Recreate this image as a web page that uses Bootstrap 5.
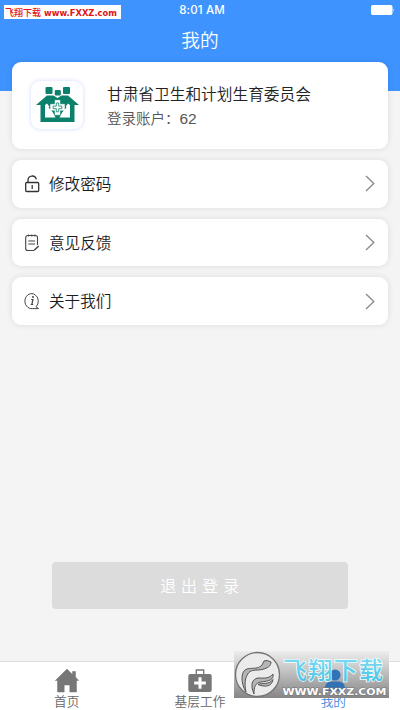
<!DOCTYPE html>
<html lang="zh-CN">
<head>
<meta charset="utf-8">
<meta name="viewport" content="width=device-width, initial-scale=1">
<title>我的</title>
<link href="https://cdn.jsdelivr.net/npm/bootstrap@5.3.0/dist/css/bootstrap.min.css" rel="stylesheet">
<style>
body{background:#f4f4f4;font-family:"Noto Sans CJK SC",sans-serif;color:#333;font-weight:300;height:710px}
.app-head{background:#3e93ff;height:91px}
.status{height:21px;font:500 11.5px/21px Inter,sans-serif;letter-spacing:.15px}
.battery{right:5px;top:5px}
.site-tag{left:4px;top:5px;width:117px;height:14px;background:#fff}
.site-tag svg,.wm svg{display:block}
.page-title{font-size:18.7px;line-height:36px;font-weight:350}
.panel{border-radius:9px;background:#fff;box-shadow:0 0 6px rgba(0,0,0,.1)}
.profile{height:87px;margin-top:-29px;padding-left:19px}
.avatar{width:52px;height:48px;border-radius:9px;box-shadow:0 0 4px rgba(90,120,240,.28);margin-top:-2px}
.who{margin-left:24px;margin-top:-1px}
.org{font-size:15.7px;line-height:24px;font-weight:350;color:#222}
.acct{font-size:14.5px;line-height:23px;font-weight:350;color:#555}
.acct b{font:400 15.5px "Liberation Sans",sans-serif}
.menu{gap:11px;margin-top:11px}
.menu-item{height:47.7px;padding:0 13px 0 12px;color:#1c1c1c}
.menu-item span{font-size:15.6px;font-weight:350;line-height:22px;margin:-2px 0 0 8px}
.w-94{width:376px}
.logout{width:296px;height:47px;background:#dcdcdc;color:#fff;border:0;border-radius:4px;font-size:16px;letter-spacing:4.9px;font-weight:350;margin-bottom:53px;padding:4px 0 6px 4px}
.tabs{height:48px;background:#fff;box-shadow:0 -1px 0 #dedede}
.tab{color:#666;font-size:12.7px;font-weight:350;line-height:17px;padding-top:6px}
.tab.on{color:#3e88e0}
.tab svg{display:block;height:25px;margin-bottom:-1px}
.wm{left:234px;top:651px}
</style>
<script src="https://cdn.jsdelivr.net/npm/bootstrap@5.3.0/dist/js/bootstrap.bundle.min.js"></script>
</head>
<body class="d-flex flex-column position-relative overflow-hidden">
<header class="app-head text-white text-center flex-shrink-0">
  <div class="status ps-1">8:01 AM</div>
  <svg class="battery position-absolute" width="24" height="10"><rect width="21.5" height="10" rx="1.8" fill="#fff"/><path d="M22.4 3.3q1.4 1.7 0 3.4z" fill="#fff"/></svg>
  <div class="page-title">我的</div>
  <div class="site-tag position-absolute"><svg width="117" height="14"><text x="1" y="10.700" textLength="36" lengthAdjust="spacingAndGlyphs" font-family="Noto Sans CJK SC" font-size="9" font-weight="500" fill="#e01515">飞翔下载</text><text x="40" y="10.500" textLength="73" lengthAdjust="spacingAndGlyphs" font-family="DejaVu Sans, sans-serif" font-size="9" font-weight="700" fill="#e01515">www.FXXZ.com</text></svg></div>
</header>

<main class="d-flex flex-column flex-grow-1">
  <section class="panel profile d-flex align-items-center mx-auto w-94">
    <div class="avatar flex-shrink-0 bg-white d-flex justify-content-center align-items-center">
      <svg width="43" height="36" viewBox="0 0 43 36"><g fill="#0b806b"><rect x="9.500" y="0" width="7" height="7" rx="1"/><rect x="18.800" y="3" width="6" height="5.500" rx="1"/><rect x="27" y="0" width="7" height="7" rx="1"/><path d="M0 18 11 8.500h6.500l4 2.500 4-2.500H32L43 18h-4.500v17H4.500V18z"/></g><path d="M9 18 11 16.500l3.500 4.500 5 9.500H9zM34 18 32 16.500 28.500 21l-5 9.500H34z" fill="#fff"/><path d="m21.500 11.500 9 9-9 9.500-9-9.500z" fill="#0b806b"/><path d="M19 13.300h5v4h4.500v6H24v4.500h-5v-4.500h-4.500v-6H19z" fill="#fff" stroke="#fff" stroke-width=".5" stroke-linejoin="round"/><path d="M20.300 16h2.400v3.100h3.100v2.600h-3.100v3.100h-2.400v-3.100h-3.100v-2.600h3.100z" fill="#fff" stroke="#0b806b" stroke-width=".8"/></svg>
    </div>
    <div class="who">
      <div class="org">甘肃省卫生和计划生育委员会</div>
      <div class="acct">登录账户：<b>62</b></div>
    </div>
  </section>

  <nav class="menu d-flex flex-column mx-auto w-94">
    <a class="panel menu-item d-flex align-items-center text-decoration-none" href="#">
      <svg width="17" height="18" viewBox="0 0 17 18" fill="none" stroke="#333" stroke-width="1.300"><rect x="1.700" y="7.500" width="13" height="9" rx="1"/><path d="M4 7.500V5.200a4.200 4.200 0 0 1 8.300-.9M8.200 10v4"/></svg>
      <span class="flex-grow-1">修改密码</span>
      <svg width="10" height="17" fill="none" stroke="#888" stroke-width="1.300"><path d="m1 1 7.800 7.500L1 16"/></svg>
    </a>
    <a class="panel menu-item d-flex align-items-center text-decoration-none" href="#">
      <svg width="17" height="18" viewBox="0 0 17 18" fill="none" stroke="#444" stroke-width="1.100"><path d="M13.500 11V3.500a2 2 0 0 0-2-2H3.700a2 2 0 0 0-2 2v11a2 2 0 0 0 2 2H10M4.300 7h6.800M4.300 10h6.800M4.500.5v2M7.800.5v2M11 .5v2"/><path d="m14.700 12-4.500 4.300" stroke-width="1.500"/></svg>
      <span class="flex-grow-1">意见反馈</span>
      <svg width="10" height="17" fill="none" stroke="#888" stroke-width="1.300"><path d="m1 1 7.800 7.500L1 16"/></svg>
    </a>
    <a class="panel menu-item d-flex align-items-center text-decoration-none" href="#">
      <svg width="17" height="18" viewBox="0 0 17 18" fill="none" stroke="#444" stroke-width="1"><path d="M12 14.800A6.700 7.500 0 1 0 8.300 16.600h6.200L12 14.800"/><path d="M7.200 7.500H9l-1.200 5h1.400M6.700 12.500H8" stroke-width="1.200"/><circle cx="9" cy="5" r=".9" fill="#333" stroke="none"/></svg>
      <span class="flex-grow-1">关于我们</span>
      <svg width="10" height="17" fill="none" stroke="#888" stroke-width="1.300"><path d="m1 1 7.800 7.500L1 16"/></svg>
    </a>
  </nav>
  <button class="logout btn mt-auto mx-auto" type="button">退出登录</button>
</main>

<footer class="tabs row g-0 flex-shrink-0">
  <div class="tab col-4 d-flex flex-column align-items-center"><svg width="24" height="25" viewBox="0 0 24 25"><path d="M12 1 .3 12.500h2.200V24H9.200v-7h5.600v7h6.700V12.500h2.200L20.500 9V3.500h-3v3z" fill="#777" stroke="#777" stroke-width=".5" stroke-linejoin="round"/></svg><span>首页</span></div>
  <div class="tab col-4 d-flex flex-column align-items-center"><svg width="24" height="25" viewBox="0 0 24 25"><path d="M8.300 7V2h7.400v5" fill="none" stroke="#777" stroke-width="1.300"/><rect x=".3" y="6" width="23.400" height="18" rx="2" fill="#777"/><path d="M12 9.200v11.600M6.200 15h11.600" stroke="#fff" stroke-width="3"/></svg><span>基层工作</span></div>
  <div class="tab on col-4 d-flex flex-column align-items-center"><svg width="24" height="25"></svg><span>我的</span></div>
</footer>

<div class="wm position-absolute"><svg width="155" height="47" viewBox="0 0 155 47">
  <defs><linearGradient id="shade" x2="0" y2="1"><stop stop-color="#ededed"/><stop offset=".45" stop-color="#c0c0c0"/><stop offset="1" stop-color="#858585"/></linearGradient>
  <linearGradient id="aqua" x2="0" y2="1"><stop offset=".1" stop-color="#86def3"/><stop offset="1" stop-color="#3fbfe6"/></linearGradient></defs>
  <rect width="155" height="47" fill="url(#shade)"/>
  <g fill="#3273b8"><circle cx="101" cy="24" r="5.500"/><path d="M91 40v-3q0-6 6-6.500h8q6 1 6 6.500v3z"/></g>
  <circle cx="23.500" cy="23.500" r="22" fill="#ebebeb" stroke="#727272" stroke-width="1.300"/>
  <g fill="#b5b5b5" stroke="#555" stroke-width="1"><path d="M12 41C7 33 6 20 13 18c6-1.500 11 .5 15-4l2-4q3-1.500 7 1c0 4-3 6-9 7.500-4 1-9 0-12 2-5 4-6 12-4 20.500z"/><path d="M20 43c-4-9-2-15 4-16 6 0 11 1 15-4 1 6-4 7-12 8-6 1-7 5-7 12z"/><path d="M24 33.500c5-2 11 .5 15-5-1 7-8 8-15 5z"/></g>
  <text x="49" y="27.500" textLength="100" lengthAdjust="spacing" font-family="Noto Sans CJK SC" font-size="24" font-weight="500" fill="url(#aqua)" stroke="#f6feff" stroke-width="1.500" paint-order="stroke">飞翔下载</text>
  <text x="48.500" y="43.800" textLength="104" lengthAdjust="spacingAndGlyphs" font-family="DejaVu Sans" font-size="9.500" font-weight="700" fill="#fff" stroke="#777" stroke-width="1" paint-order="stroke">WWW.FXXZ.COM</text>
</svg></div>
</body>
</html>
